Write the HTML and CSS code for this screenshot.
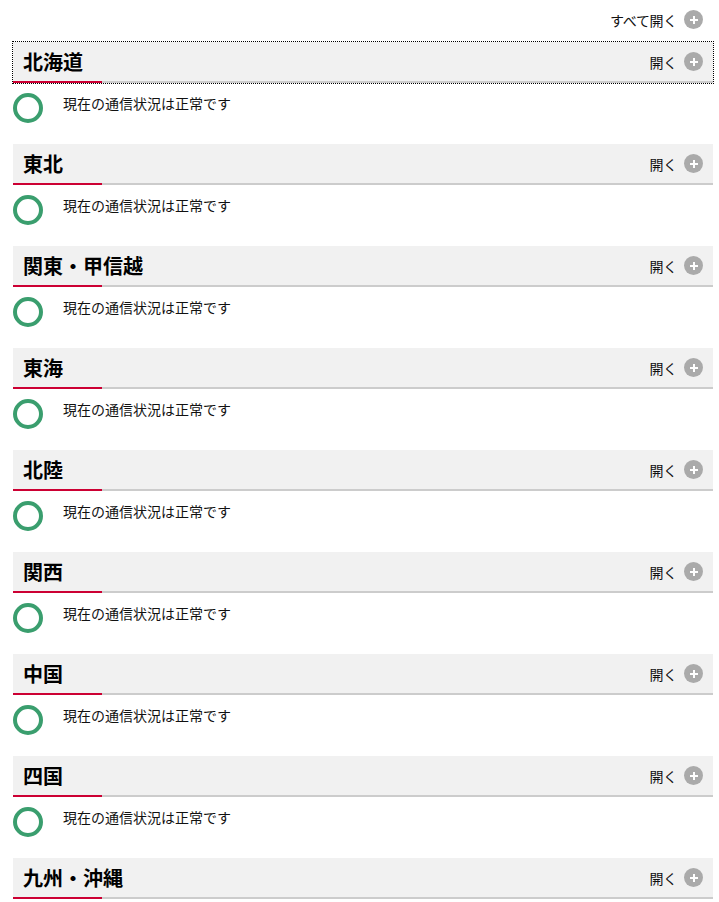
FILE: index.html
```html
<!DOCTYPE html>
<html lang="ja">
<head>
<meta charset="utf-8">
<link rel="stylesheet" href="styles.css">
</head>
<body>
<div class="page">
  <div class="topbar">
    <span class="open-label">すべて開く</span><span class="plus"></span>
  </div>

  <section class="area">
    <div class="area-head focus"><h2>北海道</h2><span class="toggle"><span class="open-label">開く</span><span class="plus"></span></span></div>
    <div class="area-body"><span class="ok"></span><p>現在の通信状況は正常です</p></div>
  </section>
  <section class="area">
    <div class="area-head"><h2>東北</h2><span class="toggle"><span class="open-label">開く</span><span class="plus"></span></span></div>
    <div class="area-body"><span class="ok"></span><p>現在の通信状況は正常です</p></div>
  </section>
  <section class="area">
    <div class="area-head"><h2>関東・甲信越</h2><span class="toggle"><span class="open-label">開く</span><span class="plus"></span></span></div>
    <div class="area-body"><span class="ok"></span><p>現在の通信状況は正常です</p></div>
  </section>
  <section class="area">
    <div class="area-head"><h2>東海</h2><span class="toggle"><span class="open-label">開く</span><span class="plus"></span></span></div>
    <div class="area-body"><span class="ok"></span><p>現在の通信状況は正常です</p></div>
  </section>
  <section class="area">
    <div class="area-head"><h2>北陸</h2><span class="toggle"><span class="open-label">開く</span><span class="plus"></span></span></div>
    <div class="area-body"><span class="ok"></span><p>現在の通信状況は正常です</p></div>
  </section>
  <section class="area">
    <div class="area-head"><h2>関西</h2><span class="toggle"><span class="open-label">開く</span><span class="plus"></span></span></div>
    <div class="area-body"><span class="ok"></span><p>現在の通信状況は正常です</p></div>
  </section>
  <section class="area">
    <div class="area-head"><h2>中国</h2><span class="toggle"><span class="open-label">開く</span><span class="plus"></span></span></div>
    <div class="area-body"><span class="ok"></span><p>現在の通信状況は正常です</p></div>
  </section>
  <section class="area">
    <div class="area-head"><h2>四国</h2><span class="toggle"><span class="open-label">開く</span><span class="plus"></span></span></div>
    <div class="area-body"><span class="ok"></span><p>現在の通信状況は正常です</p></div>
  </section>
  <section class="area">
    <div class="area-head"><h2>九州・沖縄</h2><span class="toggle"><span class="open-label">開く</span><span class="plus"></span></span></div>
    <div class="area-body"><span class="ok"></span><p>現在の通信状況は正常です</p></div>
  </section>
</div>
</body>
</html>
```

FILE: styles.css
```css
html, body {
  margin: 0;
  padding: 0;
  background: #fff;
}
body {
  font-family: "Noto Sans CJK JP", "Noto Sans", sans-serif;
  color: #111;
  font-size: 14px;
}
.page {
  width: 700px;
  padding: 9px 0 0 13px;
}
.topbar {
  height: 21px;
  display: flex;
  align-items: center;
  justify-content: flex-end;
  padding-right: 10px;
  margin-bottom: 12px;
}
.open-label {
  font-size: 14px;
  line-height: 20px;
  letter-spacing: -0.3px;
}
.plus {
  position: relative;
  display: inline-block;
  width: 19px;
  height: 19px;
  border-radius: 50%;
  background: #aaaaaa;
  margin-left: 7px;
}
.plus::before,
.plus::after {
  content: "";
  position: absolute;
  background: #fff;
  left: 50%;
  top: 50%;
}
.plus::before {
  width: 8px;
  height: 2px;
  margin: -1px 0 0 -4px;
}
.plus::after {
  width: 2px;
  height: 8px;
  margin: -4px 0 0 -1px;
}
.area-head {
  position: relative;
  height: 39px;
  background: #f1f1f1;
  border-bottom: 2px solid #cccccc;
  display: flex;
  align-items: center;
  justify-content: space-between;
  padding: 0 10px 0 10px;
}
.area-head::after {
  content: "";
  position: absolute;
  left: 0;
  bottom: -2px;
  width: 89px;
  height: 2px;
  background: #cc0033;
}
.area-head.focus {
  outline: 1px dotted #000;
}
.area-head h2 {
  margin: 0;
  font-size: 20px;
  font-weight: 700;
  color: #000;
  line-height: 26px;
}
.toggle {
  display: flex;
  align-items: center;
}
.area-body {
  display: flex;
  align-items: flex-start;
  padding: 10px 0 21px;
}
.ok {
  width: 22px;
  height: 22px;
  border: 4px solid #3a9e6e;
  border-radius: 50%;
  flex: none;
}
.area-body p {
  margin: 0 0 0 20px;
  font-size: 14px;
  line-height: 20px;
  padding-top: 0;
}
```
